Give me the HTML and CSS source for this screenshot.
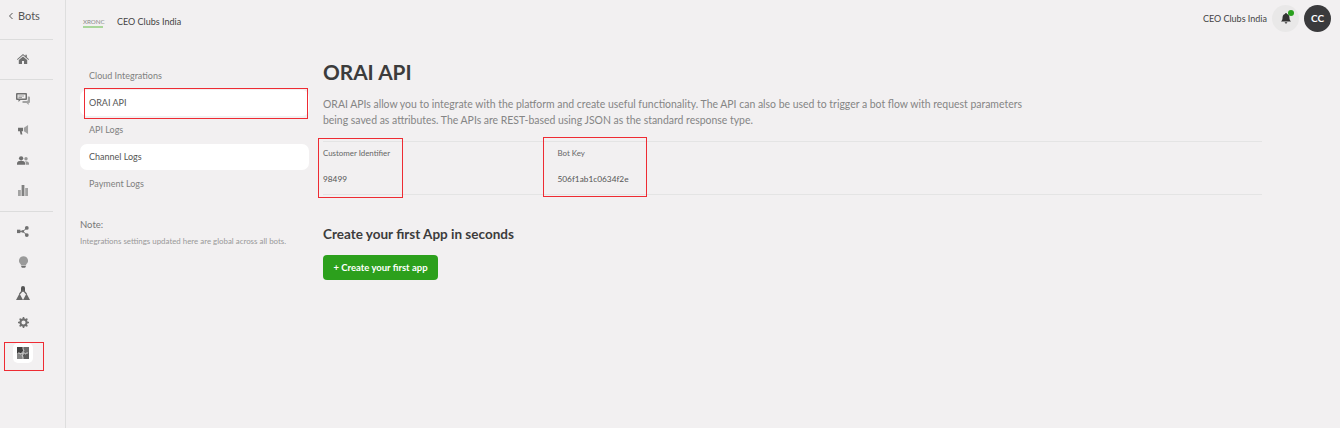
FILE: index.html
```html
<!DOCTYPE html>
<html lang="en">
<head>
<meta charset="utf-8">
<title>ORAI API</title>
<link rel="stylesheet" href="styles.css">
</head>
<body>
<div class="app">
  <aside class="rail">
    <div class="back"><svg class="chev" viewBox="0 0 6 8"><path d="M4.500 1 1.500 4l3 3" fill="none" stroke="#555" stroke-width="1"/></svg><span>Bots</span></div>
    <div class="rail-group rail-group-first">
      <div class="rail-item"><svg class="i-home" viewBox="0 0 12 10"><path d="M6 0 0 5.200l.5.700L6 1.300l5.500 4.600.5-.7-2.200-1.900V.7H8.400V2zM1.800 6v4H5V7h2v3h3.200V6L6 2.400z" fill="#6f6f6f"/></svg></div>
    </div>
    <div class="rail-group">
      <div class="rail-item"><svg class="i-chat" viewBox="0 0 14 12"><path d="M1 0h9a1 1 0 0 1 1 1v5a1 1 0 0 1-1 1H4.500L2.500 9V7H1a1 1 0 0 1-1-1V1a1 1 0 0 1 1-1z" fill="#707070"/><path d="M1.500 1.500h8v4h-8z" fill="#f2f0f1"/><path d="M2.500 3h5.500M2.500 4.500h3.500" stroke="#8a8a8a" stroke-width=".8"/><path d="M11.800 3.500H13a1 1 0 0 1 1 1V9a1 1 0 0 1-1 1h-.3v2L10.500 10H6.500V8h4.500a1 1 0 0 0 .8-1z" fill="#a3a3a3"/></svg></div>
      <div class="rail-item"><svg class="i-mega" viewBox="0 0 12 11"><path d="M0 3h5.500v4H4l.8 3.500H2.800L2 7H0z" fill="#6f6f6f"/><path d="M6.500 3 11 0v10L6.500 7z" fill="#a0a0a0"/></svg></div>
      <div class="rail-item"><svg class="i-users" viewBox="0 0 14 10"><circle cx="4.800" cy="2.500" r="2.500" fill="#6f6f6f"/><path d="M0 10V8.200c0-1.800 2.200-2.800 4.800-2.800s4.700 1 4.700 2.800V10z" fill="#6f6f6f"/><circle cx="10.500" cy="3" r="2" fill="#969696"/><path d="M10.300 10V7.800c0-.9-.4-1.500-1-2 2-.3 4.700.4 4.700 2.500V10z" fill="#969696"/></svg></div>
      <div class="rail-item"><svg class="i-bars" viewBox="0 0 10 11"><path d="M0 5h2.800v6H0z" fill="#a3a3a3"/><path d="M3.600 0h2.800v11H3.600z" fill="#808080"/><path d="M7.200 3H10v8H7.200z" fill="#a3a3a3"/></svg></div>
    </div>
    <div class="rail-group rail-group-last">
      <div class="rail-item"><svg class="i-flow" viewBox="0 0 12 11"><rect y="3.700" width="3.400" height="3.400" fill="#707070"/><rect x="4.600" y="4.200" width="2.400" height="2.400" fill="#707070"/><circle cx="9.800" cy="1.900" r="1.900" fill="#707070"/><circle cx="9.800" cy="9.100" r="1.900" fill="#707070"/><path d="M3 5.400h3L9.800 1.900M6 5.400l3.800 3.700" fill="none" stroke="#707070"/></svg></div>
      <div class="rail-item"><svg class="i-bulb" viewBox="0 0 10 13"><path d="M5 0a5 5 0 0 1 3 9v1H2V9a5 5 0 0 1 3-9z" fill="#9a9a9a"/><path d="M2.500 10.700h5V12l-1 1h-3l-1-1z" fill="#6f6f6f"/></svg></div>
      <div class="rail-item"><svg class="i-tree" viewBox="0 0 14 15"><path d="M5 3a2 2 0 1 1 4 0v3.500H5z" fill="#555"/><path d="M7 5 3.500 9M7 5l3.500 4" stroke="#666" stroke-width="1.200"/><path d="M3.500 8.500 7 15H0zM10.500 8.500 14 15H7z" fill="#6a6a6a"/></svg></div>
      <div class="rail-item"><svg class="i-gear" viewBox="0 0 12 12"><circle cx="6" cy="6" r="3.400" fill="none" stroke="#707070" stroke-width="2.300"/><path d="M6 0v2.400M6 9.600V12M0 6h2.400M9.600 6H12M1.800 1.800l1.700 1.700M8.500 8.500l1.700 1.700M10.200 1.800 8.500 3.500M3.500 8.500l-1.700 1.700" stroke="#707070" stroke-width="1.700"/></svg></div>
      <div class="rail-item"><span class="tile"><svg class="i-puzzle" viewBox="0 0 12 12"><path d="M0 0h6v6H0z" fill="#3f3f3f"/><path d="M6 0h6v6H6z" fill="#6b6b6b"/><path d="M0 6h6v6H0z" fill="#858585"/><path d="M6 6h6v6H6z" fill="#5c5c5c"/><path d="M6 0v2.500c1.200 0 1.200 1.500 0 1.500v2H4.200c0 1.300-1.500 1.300-1.500 0H1M6 6h1.800c0 1.300 1.500 1.300 1.500 0H11M6 6v2c-1.200 0-1.200 1.500 0 1.500V12" fill="none" stroke="#e6e6e6" stroke-width=".8"/></svg></span></div>
    </div>
    <div class="mark mark-rail"></div>
  </aside>
  <div class="page">
    <header class="topbar">
      <div class="brand">
        <span class="logo"><span class="logo-word">XRONC</span><span class="logo-line"></span></span>
        <span>CEO Clubs India</span>
      </div>
      <div class="account">
        <span class="account-name">CEO Clubs India</span>
        <span class="bell"><svg viewBox="0 0 10 11"><path d="M5 0a1 1 0 0 1 1 1c2 .5 2.500 2.200 2.500 4 0 1.500.5 2.500 1.500 3.500H0C1 7.500 1.500 6.500 1.500 5c0-1.800.5-3.500 2.500-4a1 1 0 0 1 1-1zM3.700 9.300h2.600a1.300 1.300 0 0 1-2.600 0z" fill="#333"/></svg><i class="dot"></i></span>
        <span class="avatar">CC</span>
      </div>
    </header>
    <div class="body">
      <nav class="side">
        <a class="side-link">Cloud Integrations</a>
        <a class="side-link is-white is-dark">ORAI API<i class="mark mark-nav"></i></a>
        <a class="side-link">API Logs</a>
        <a class="side-link is-white is-dark">Channel Logs</a>
        <a class="side-link">Payment Logs</a>
        <p class="note-title">Note:</p>
        <p class="note-text">Integrations settings updated here are global across all bots.</p>
      </nav>
      <main class="content">
        <h1>ORAI API</h1>
        <p class="lead">ORAI APIs allow you to integrate with the platform and create useful functionality. The API can also be used to trigger a bot flow with request parameters<br>being saved as attributes. The APIs are REST-based using JSON as the standard response type.</p>
        <div class="keys">
          <div class="key">
            <div class="key-label">Customer Identifier</div>
            <div class="key-value">98499</div>
            <i class="mark mark-id"></i>
          </div>
          <div class="key">
            <div class="key-label">Bot Key</div>
            <div class="key-value">506f1ab1c0634f2e</div>
            <i class="mark mark-key"></i>
          </div>
        </div>
        <h2>Create your first App in seconds</h2>
        <button class="cta" type="button">+ Create your first app</button>
      </main>
    </div>
  </div>
</div>
</body>
</html>
```
FILE: styles.css
```css
* { box-sizing: border-box; }
html, body { margin: 0; height: 100%; }
body {
  background: #f2f0f1;
  font-family: Lato, "Noto Sans", sans-serif;
  color: #444;
  overflow: hidden;
}
.app { display: flex; height: 428px; }

.rail {
  position: relative;
  width: 66px;
  flex: none;
  border-right: 1px solid #dedede;
  padding-right: 12px;
}
.back {
  height: 40px;
  padding: 9px 0 0 8px;
  display: flex;
  align-items: flex-start;
  gap: 4px;
  font-size: 11px;
  line-height: 14px;
  color: #555;
  border-bottom: 1px solid #dcdcdc;
}
.chev { width: 6px; height: 8px; margin-top: 3px; }
.rail-group { border-bottom: 1px solid #dcdcdc; padding: 4px 0 5px; }
.rail-group-first { padding-bottom: 4.500px; }
.rail-group-last { border-bottom: 0; }
.rail-item { height: 30.500px; display: flex; align-items: center; justify-content: center; width: 46px; }
.rail-item svg { display: block; }
.i-home { width: 12px; height: 10px; }
.i-chat { width: 14px; height: 12px; }
.i-mega { width: 11px; height: 10px; }
.i-users { width: 12px; height: 9px; }
.i-bars { width: 10px; height: 11px; }
.i-flow { width: 12px; height: 11px; }
.i-bulb { width: 9px; height: 12px; }
.i-tree { width: 14px; height: 15px; }
.i-gear { width: 11px; height: 11px; }
.i-puzzle { width: 12px; height: 12px; }
.tile {
  width: 20px;
  height: 20px;
  background: #fff;
  border-radius: 5px;
  display: flex;
  align-items: center;
  justify-content: center;
}
.mark { position: absolute; border: 1px solid #ee2b33; display: block; }
.mark-rail { left: 4px; top: 342px; width: 40px; height: 29px; }

.page { flex: 1; min-width: 0; }
.topbar {
  height: 44px;
  display: flex;
  justify-content: space-between;
  padding: 0 9px 0 17px;
}
.brand { display: flex; align-items: center; gap: 14px; font-size: 9px; color: #444; margin-top: -1px; }
.logo { display: flex; flex-direction: column; width: 20px; margin-top: 3px; }
.logo-word { font-size: 6.200px; line-height: 6px; color: #888; }
.logo-line { height: 2px; margin-top: 1px; background: #a9d69a; }
.account { display: flex; align-items: center; gap: 5px; height: 36px; font-size: 9px; color: #444; }
.bell {
  position: relative;
  width: 27px;
  height: 27px;
  border-radius: 50%;
  background: #e9e8e8;
  display: flex;
  align-items: center;
  justify-content: center;
}
.bell svg { width: 10px; height: 11px; }
.dot {
  position: absolute;
  top: 5px;
  right: 5px;
  width: 6px;
  height: 6px;
  border-radius: 50%;
  background: #2aa01e;
}
.avatar {
  width: 27px;
  height: 27px;
  border-radius: 50%;
  background: #3a3a3c;
  color: #fff;
  font-size: 10px;
  font-weight: 700;
  display: flex;
  align-items: center;
  justify-content: center;
}

.body { display: flex; padding-left: 14px; }
.side { width: 229px; flex: none; padding-top: 19px; }
.side-link {
  position: relative;
  display: block;
  height: 26px;
  margin-bottom: 1px;
  padding-left: 9px;
  font-size: 9px;
  line-height: 26px;
  color: #808080;
  border-radius: 7px;
}
.is-white { background: #fff; }
.is-dark { color: #555; }
.mark-nav { left: 4px; top: -2px; width: 224px; height: 31px; }
.note-title { margin: 21px 0 0; font-size: 9.500px; line-height: 14px; color: #777; }
.note-text { margin: 4px 0 0; font-size: 7.900px; line-height: 10px; color: #999; white-space: nowrap; }

.content { margin-left: 14px; width: 939px; padding-top: 16px; }
h1 { margin: 0; font-size: 20.800px; line-height: 24px; font-weight: 700; color: #3c3c3c; }
.lead { margin: 12px 0 0; font-size: 10.450px; line-height: 16px; color: #858585; }
.keys {
  display: flex;
  margin-top: 13px;
  height: 54px;
  border-top: 1px solid #e4e4e4;
  border-bottom: 1px solid #e4e4e4;
}
.key { position: relative; width: 234.500px; padding-top: 6px; }
.key-label { font-size: 7.900px; line-height: 11px; color: #666; }
.key-value { margin-top: 14px; font-size: 8.300px; line-height: 12px; color: #555; }
.mark-id { left: -5px; top: -4px; width: 85px; height: 60px; }
.mark-key { left: -15px; top: -5px; width: 104px; height: 60px; }
h2 { margin: 30px 0 0; font-size: 13.500px; line-height: 18px; font-weight: 700; color: #3c3c3c; }
.cta {
  display: block;
  margin-top: 12px;
  width: 115px;
  height: 25px;
  padding: 0;
  border: 0;
  border-radius: 4px;
  background: #2ca01c;
  color: #fff;
  font-family: inherit;
  font-size: 9.500px;
  font-weight: 700;
}
```
